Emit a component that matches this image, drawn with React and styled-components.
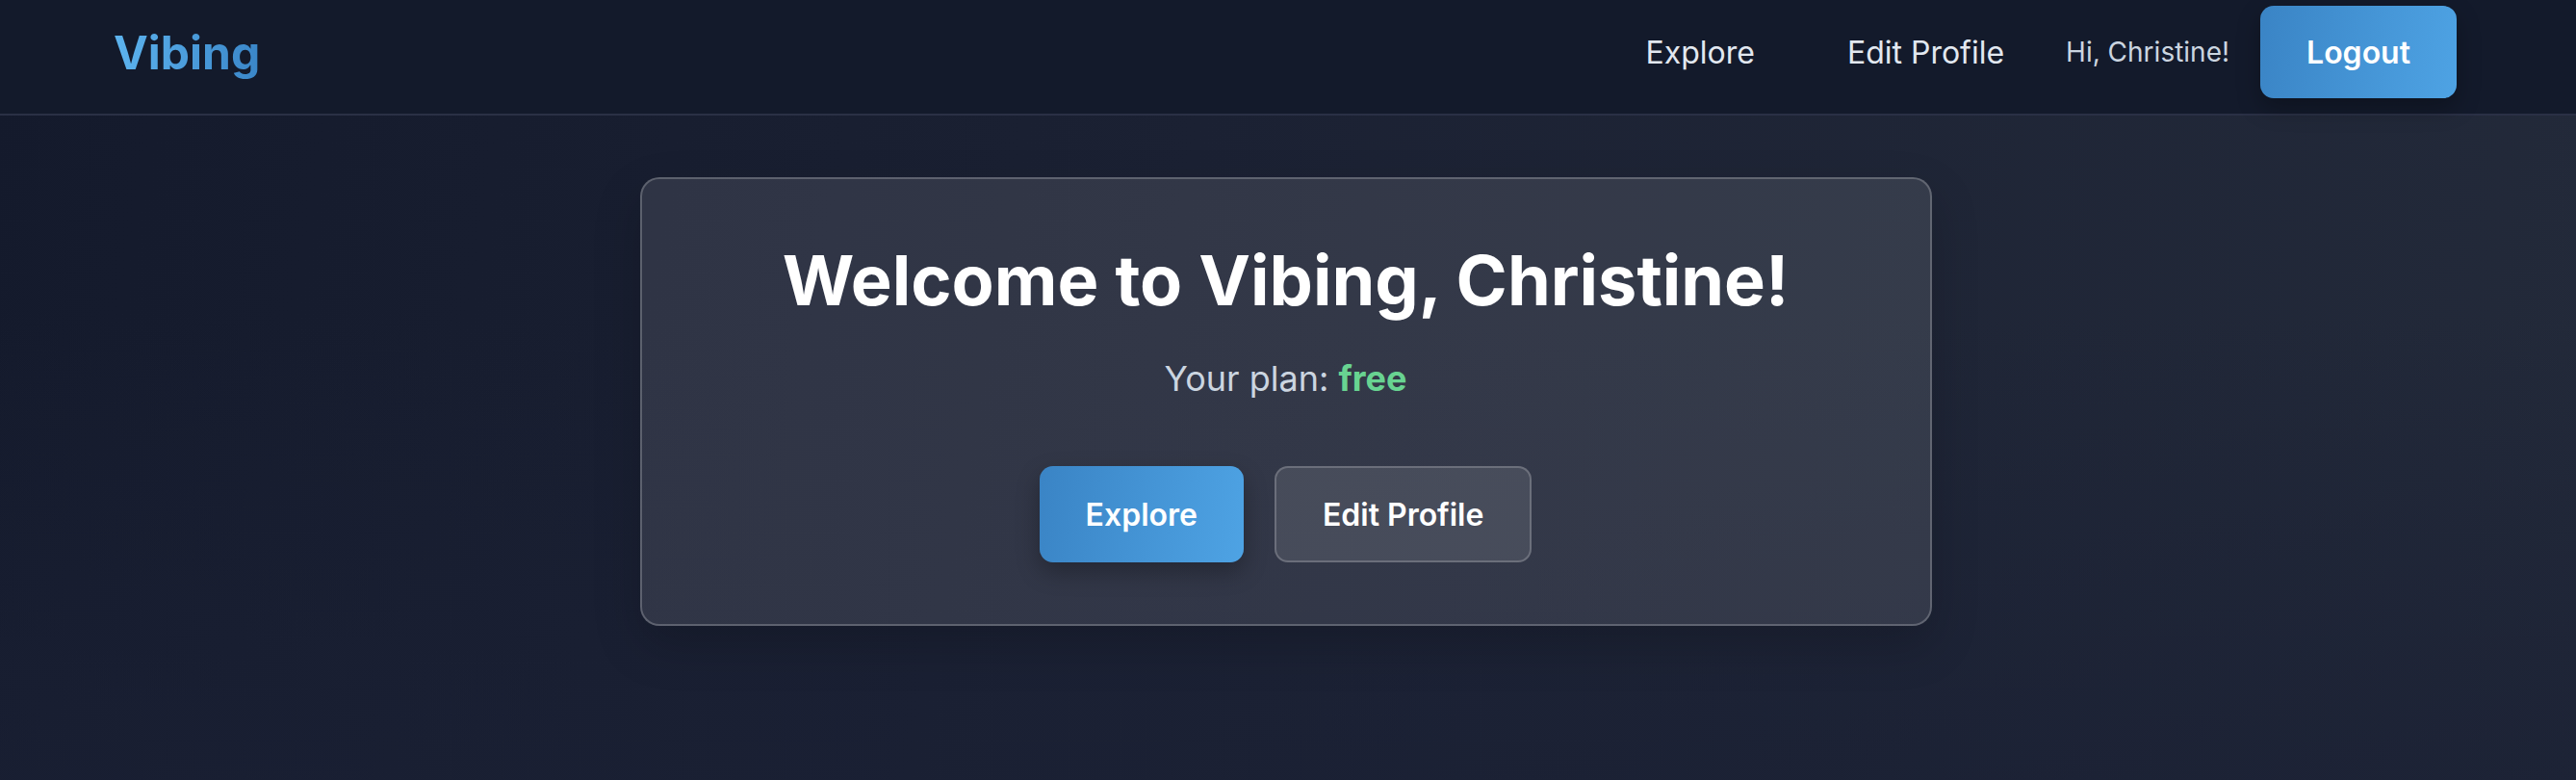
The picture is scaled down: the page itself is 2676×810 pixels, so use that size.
import React from "react";
import styled, { createGlobalStyle } from "styled-components";

const GlobalStyle = createGlobalStyle`
  html, body {
    margin: 0;
    padding: 0;
  }

  body {
    font-family: Inter, "Noto Sans", sans-serif;
    background: #161c2e;
  }
`;

const Page = styled.div`
  min-height: 810px;
  width: 100%;
  background:
    linear-gradient(180deg, rgba(22, 28, 48, 0) 40%, rgba(26, 32, 52, 0.7) 100%),
    linear-gradient(100deg, #141a2c 0%, #1b2133 45%, #232a3a 100%);
  color: #fff;
`;

const Header = styled.header`
  display: flex;
  align-items: center;
  justify-content: space-between;
  padding: 6px 124px 16px 118px;
  background: #131a2b;
  border-bottom: 2px solid #2a3045;
`;

const Logo = styled.div`
  font-size: 48px;
  font-weight: 700;
  background: linear-gradient(90deg, #5db4ef, #3a86c8);
  -webkit-background-clip: text;
  background-clip: text;
  color: transparent;
`;

const Nav = styled.nav`
  display: flex;
  align-items: center;
  gap: 32px;
`;

const NavLink = styled.a`
  padding: 0 32px;
  font-size: 32px;
  color: #e2e8f0;
  text-decoration: none;
  cursor: pointer;
`;

const Greeting = styled.span`
  font-size: 28px;
  color: #cbd5e0;
`;

const Button = styled.button`
  height: ${(p) => p.$height || 100}px;
  padding: 0 48px;
  border-radius: 14px;
  font-family: Inter, "Noto Sans", sans-serif;
  font-size: 32px;
  font-weight: 600;
  color: #fff;
  cursor: pointer;
  border: ${(p) => (p.$variant === "ghost" ? "2px solid rgba(255, 255, 255, 0.2)" : "none")};
  background: ${(p) =>
    p.$variant === "ghost"
      ? "rgba(255, 255, 255, 0.1)"
      : "linear-gradient(100deg, #3a84c5 0%, #4ea3e4 100%)"};
  box-shadow: ${(p) =>
    p.$variant === "ghost" ? "none" : "0 10px 24px rgba(0, 0, 0, 0.28)"};
`;

const Main = styled.main`
  display: flex;
  justify-content: center;
  padding: 64px 5px 64px 0;
`;

const Card = styled.section`
  box-sizing: border-box;
  width: 1342px;
  padding: 62px 64px 64px;
  display: flex;
  flex-direction: column;
  align-items: center;
  background: rgba(255, 255, 255, 0.1);
  border: 2px solid rgba(255, 255, 255, 0.22);
  border-radius: 20px;
  box-shadow: 0 20px 50px rgba(0, 0, 0, 0.18);
`;

const Title = styled.h1`
  margin: 0 0 32px;
  font-size: 72px;
  line-height: 1.2;
  font-weight: 700;
  color: #fff;
`;

const Plan = styled.p`
  margin: 0 0 64px;
  font-size: 36px;
  line-height: 1.5;
  color: #cbd5e0;
`;

const PlanName = styled.span`
  font-weight: 700;
  color: #68d391;
`;

const Actions = styled.div`
  display: flex;
  gap: 32px;
`;

export default function App() {
  return (
    <>
      <GlobalStyle />
      <Page>
        <Header>
          <Logo>Vibing</Logo>
          <Nav>
            <NavLink>Explore</NavLink>
            <NavLink>Edit Profile</NavLink>
            <Greeting>Hi, Christine!</Greeting>
            <Button $height={96}>Logout</Button>
          </Nav>
        </Header>
        <Main>
          <Card>
            <Title>Welcome to Vibing, Christine!</Title>
            <Plan>
              Your plan: <PlanName>free</PlanName>
            </Plan>
            <Actions>
              <Button>Explore</Button>
              <Button $variant="ghost">Edit Profile</Button>
            </Actions>
          </Card>
        </Main>
      </Page>
    </>
  );
}
